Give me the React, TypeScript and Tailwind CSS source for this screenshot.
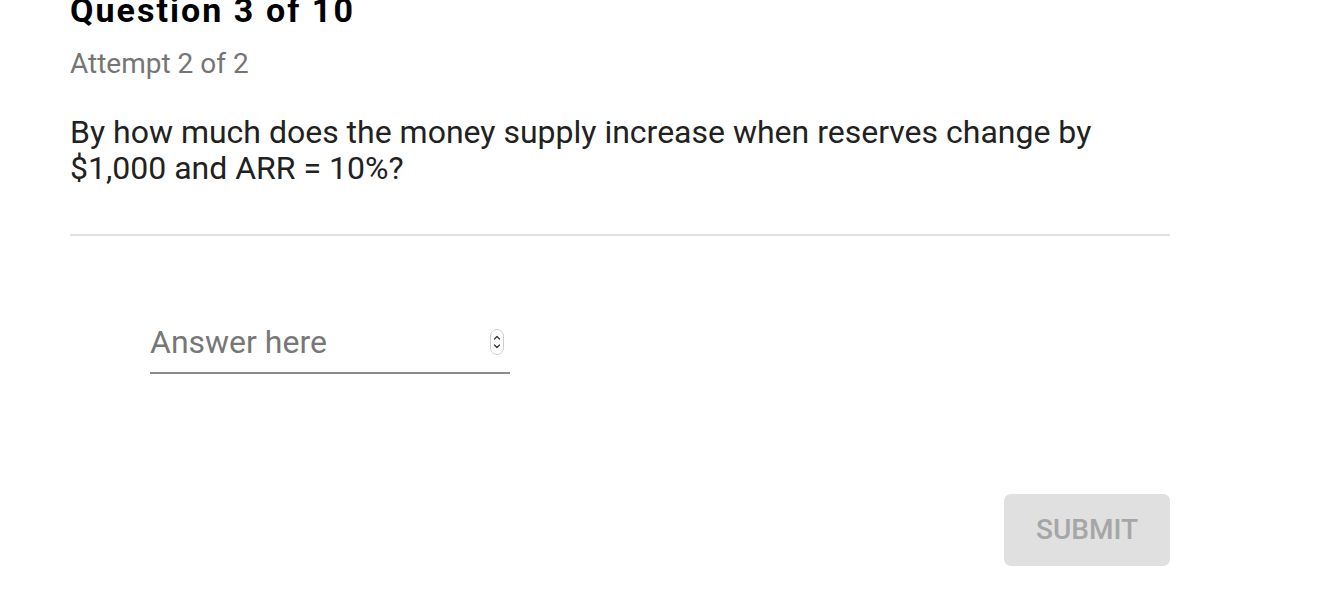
import { useState } from 'react'

function Spinner() {
  return (
    <svg width="14" height="26" viewBox="0 0 14 26" className="shrink-0">
      <rect x="0.5" y="0.5" width="13" height="25" rx="6.5" fill="#fff" stroke="#cfcfcf" strokeWidth="1" />
      <path d="M4.5 10 L7 7.5 L9.5 10" fill="none" stroke="#333" strokeWidth="1.3" strokeLinecap="round" strokeLinejoin="round" />
      <path d="M4.5 16 L7 18.5 L9.5 16" fill="none" stroke="#333" strokeWidth="1.3" strokeLinecap="round" strokeLinejoin="round" />
    </svg>
  )
}

export default function App() {
  const [value, setValue] = useState('')

  return (
    <div className="min-h-[608px] bg-white font-['Roboto',sans-serif] overflow-hidden">
      <div className="w-[1100px] ml-[70px] -mt-[8px]">
        <h1 className="text-[34px] leading-[36px] font-bold tracking-[0.06em] text-black">Question 3 of 10</h1>
        <p className="mt-[20px] text-[28px] leading-[32px] text-[#757575]">Attempt 2 of 2</p>
        <p className="mt-[34px] text-[32px] leading-[36px] text-[#212121]">
          By how much does the money supply increase when reserves change by $1,000 and ARR = 10%?
        </p>
        <div className="mt-[48px] h-[2px] bg-[#e0e0e0]" />
        <div className="mt-[88px] ml-[80px] w-[360px] flex items-center border-b-2 border-[#8c8c8c] pb-[12px]">
          <input
            type="text"
            value={value}
            onChange={(e) => setValue(e.target.value)}
            placeholder="Answer here"
            className="flex-1 min-w-0 bg-transparent outline-none text-[32px] leading-[36px] text-[#212121] placeholder:text-[#777777]"
          />
          <div className="mr-[6px]">
            <Spinner />
          </div>
        </div>
        <div className="mt-[120px] flex justify-end">
          <button className="w-[166px] h-[72px] rounded-[7px] bg-[#e0e0e0] text-[28px] font-medium text-[#a6a6a6]">
            SUBMIT
          </button>
        </div>
      </div>
    </div>
  )
}
